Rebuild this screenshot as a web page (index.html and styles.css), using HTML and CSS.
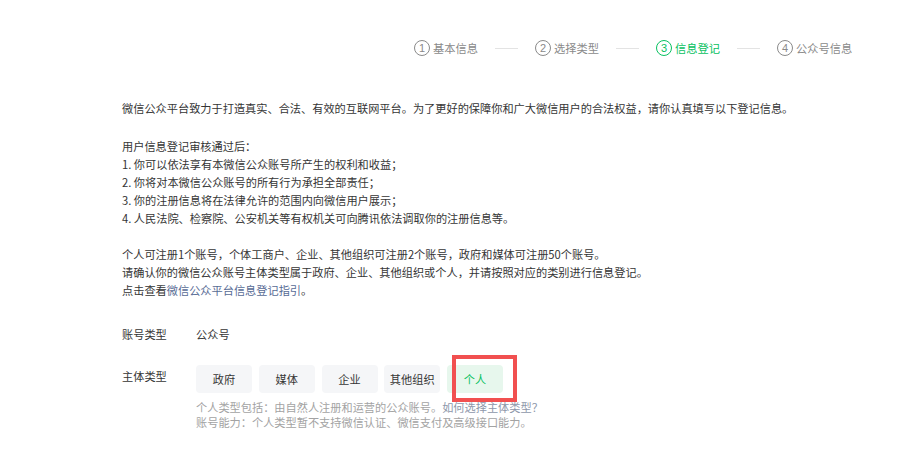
FILE: index.html
```html
<!DOCTYPE html>
<html lang="zh-CN">
<head>
<meta charset="utf-8">
<title>信息登记</title>
<link rel="stylesheet" href="styles.css">
</head>
<body>
<div class="page">
  <div class="steps">
    <div class="step"><span class="num">1</span><span class="label">基本信息</span></div>
    <span class="sep"></span>
    <div class="step"><span class="num">2</span><span class="label">选择类型</span></div>
    <span class="sep"></span>
    <div class="step active"><span class="num">3</span><span class="label">信息登记</span></div>
    <span class="sep"></span>
    <div class="step"><span class="num">4</span><span class="label">公众号信息</span></div>
  </div>

  <div class="intro">
    <p class="p1">微信公众平台致力于打造真实、合法、有效的互联网平台。为了更好的保障你和广大微信用户的合法权益，请你认真填写以下登记信息。</p>
    <p class="p2">用户信息登记审核通过后：<br>1. 你可以依法享有本微信公众账号所产生的权利和收益；<br>2. 你将对本微信公众账号的所有行为承担全部责任；<br>3. 你的注册信息将在法律允许的范围内向微信用户展示；<br>4. 人民法院、检察院、公安机关等有权机关可向腾讯依法调取你的注册信息等。</p>
    <p class="p3">个人可注册1个账号，个体工商户、企业、其他组织可注册2个账号，政府和媒体可注册50个账号。<br>请确认你的微信公众账号主体类型属于政府、企业、其他组织或个人，并请按照对应的类别进行信息登记。<br>点击查看<a class="link" href="#">微信公众平台信息登记指引</a>。</p>
  </div>

  <div class="form">
    <div class="row row-account">
      <div class="flabel">账号类型</div>
      <div class="fvalue">公众号</div>
    </div>
    <div class="row row-type">
      <div class="flabel type-label">主体类型</div>
      <div class="fvalue">
        <div class="options">
          <span class="opt">政府</span>
          <span class="opt">媒体</span>
          <span class="opt">企业</span>
          <span class="opt">其他组织</span>
          <span class="opt selected">个人<span class="mark"></span></span>
        </div>
        <div class="hint">
          <div>个人类型包括：由自然人注册和运营的公众账号。<a class="hint-link" href="#">如何选择主体类型？</a></div>
          <div>账号能力：个人类型暂不支持微信认证、微信支付及高级接口能力。</div>
        </div>
      </div>
    </div>
  </div>
</div>
</body>
</html>
```

FILE: styles.css
```css
html, body {
  margin: 0;
  padding: 0;
  background: #ffffff;
}

body {
  font-family: "Noto Sans CJK SC", "Noto Sans", sans-serif;
  color: #353535;
  font-size: 11.2px;
}

.page {
  padding: 40px 0 0 122px;
}

.steps {
  display: flex;
  align-items: center;
  height: 16px;
  margin-left: 292px;
}

.step {
  display: flex;
  align-items: center;
  gap: 3px;
  color: #8a8a8a;
  font-size: 11.25px;
  line-height: 16px;
}

.step .num {
  box-sizing: border-box;
  width: 16px;
  height: 16px;
  border: 1px solid #8a8a8a;
  border-radius: 50%;
  display: flex;
  align-items: center;
  justify-content: center;
  font-size: 11px;
  line-height: 1;
  font-family: "Liberation Sans", sans-serif;
}

.step.active {
  color: #07c160;
}

.step.active .num {
  border-color: #07c160;
}

.sep {
  width: 23px;
  height: 1px;
  background: #e3e3e3;
  margin: 0 17px;
}

.intro {
  margin-top: 43px;
  line-height: 18px;
}

.intro p {
  margin: 0;
}

.intro .p2 {
  margin-top: 20px;
}

.intro .p3 {
  margin-top: 18px;
}

.link {
  color: #576b95;
  text-decoration: none;
}

.form {
  margin-top: 26px;
}

.row {
  display: flex;
  line-height: 18px;
}

.row-type {
  margin-top: 22px;
}

.flabel {
  width: 74px;
  flex: none;
}

.type-label {
  padding-top: 2px;
}

.options {
  display: flex;
  gap: 6.75px;
}

.opt {
  position: relative;
  width: 56px;
  height: 28px;
  display: flex;
  align-items: center;
  justify-content: center;
  background: #f5f6f8;
  border-radius: 4px;
  color: #353535;
}

.opt.selected {
  background: #e7f7ed;
  color: #07c160;
}

.mark {
  position: absolute;
  left: 5px;
  top: -10px;
  width: 65px;
  height: 47px;
  box-sizing: border-box;
  border: 4px solid #f15050;
}

.hint {
  margin-top: 7px;
  line-height: 15px;
  color: #a3a3a3;
}

.hint-link {
  color: #8e97aa;
  text-decoration: none;
}
```
